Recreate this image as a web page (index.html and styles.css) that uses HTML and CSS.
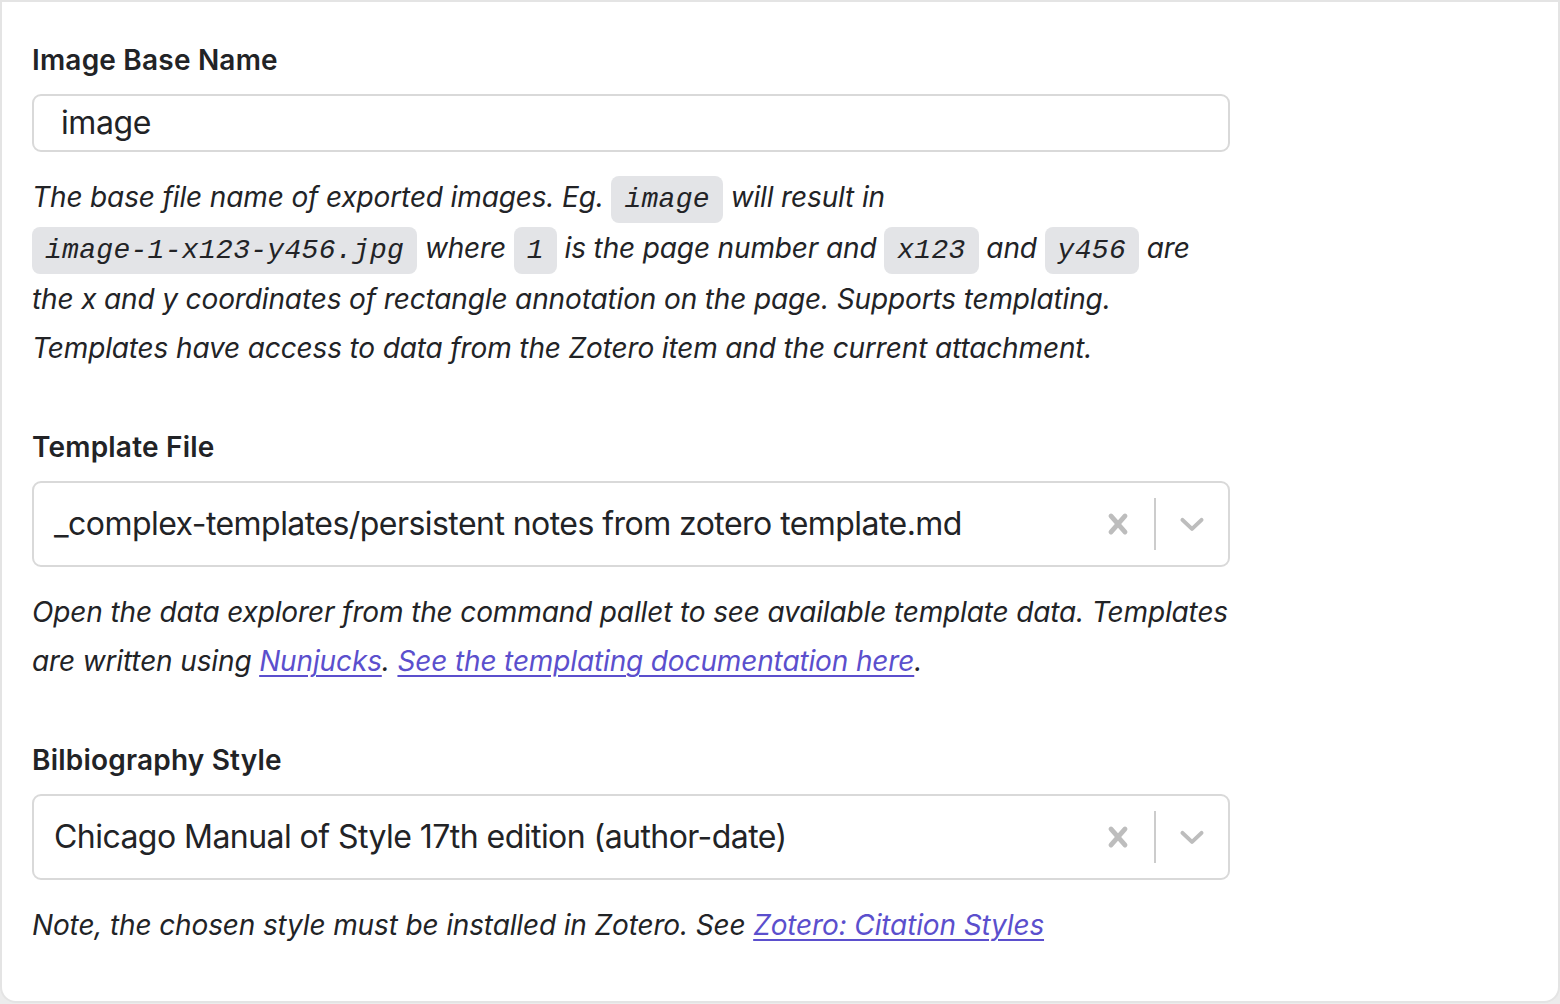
FILE: index.html
```html
<!DOCTYPE html>
<html>
<head>
<meta charset="utf-8">
<link rel="stylesheet" href="styles.css">
</head>
<body>
<div class="card">
  <div class="setting">
    <div class="label">Image Base Name</div>
    <div class="text-input">image</div>
    <p class="desc">The base file name of exported images. Eg. <code>image</code> will result in <code>image-1-x123-y456.jpg</code> where <code>1</code> is the page number and <code>x123</code> and <code>y456</code> are the x and y coordinates of rectangle annotation on the page. Supports templating. Templates have access to data from the Zotero item and the current attachment.</p>
  </div>
  <div class="setting">
    <div class="label">Template File</div>
    <div class="select">
      <div class="select-value">_complex-templates/persistent notes from zotero template.md</div>
      <div class="indicators">
        <svg class="ind-icon" width="40" height="40" viewBox="0 0 20 20"><path d="M14.35 14.85a1.2 1.2 0 0 1-1.7 0L10 11.82l-2.65 3.03a1.2 1.2 0 1 1-1.7-1.7l2.76-3.15-2.76-3.15a1.2 1.2 0 1 1 1.7-1.7L10 8.18l2.65-3.03a1.2 1.2 0 1 1 1.7 1.7L11.59 10l2.76 3.15a1.2 1.2 0 0 1 0 1.7z" fill="currentColor"/></svg>
        <span class="sep"></span>
        <svg class="ind-icon" width="40" height="40" viewBox="0 0 20 20"><path d="M4.52 7.21c.4-.4 1-.4 1.4 0L10 11.12l4.08-3.91c.4-.4 1-.4 1.4 0 .38.39.38 1 0 1.38l-4.78 4.58c-.39.39-1 .39-1.4 0L4.52 8.59a.96.96 0 0 1 0-1.38z" fill="currentColor"/></svg>
      </div>
    </div>
    <p class="desc">Open the data explorer from the command pallet to see available template data. Templates are written using <a href="#">Nunjucks</a>. <a href="#">See the templating documentation here</a>.</p>
  </div>
  <div class="setting">
    <div class="label">Bilbiography Style</div>
    <div class="select">
      <div class="select-value">Chicago Manual of Style 17th edition (author-date)</div>
      <div class="indicators">
        <svg class="ind-icon" width="40" height="40" viewBox="0 0 20 20"><path d="M14.35 14.85a1.2 1.2 0 0 1-1.7 0L10 11.82l-2.65 3.03a1.2 1.2 0 1 1-1.7-1.7l2.76-3.15-2.76-3.15a1.2 1.2 0 1 1 1.7-1.7L10 8.18l2.65-3.03a1.2 1.2 0 1 1 1.7 1.7L11.59 10l2.76 3.15a1.2 1.2 0 0 1 0 1.7z" fill="currentColor"/></svg>
        <span class="sep"></span>
        <svg class="ind-icon" width="40" height="40" viewBox="0 0 20 20"><path d="M4.52 7.21c.4-.4 1-.4 1.4 0L10 11.12l4.08-3.91c.4-.4 1-.4 1.4 0 .38.39.38 1 0 1.38l-4.78 4.58c-.39.39-1 .39-1.4 0L4.52 8.59a.96.96 0 0 1 0-1.38z" fill="currentColor"/></svg>
      </div>
    </div>
    <p class="desc">Note, the chosen style must be installed in Zotero. See <a href="#">Zotero: Citation Styles</a></p>
  </div>
</div>
</body>
</html>
```

FILE: styles.css
```css
html, body {
  margin: 0;
  padding: 0;
  background: #ececec;
}
body {
  font-family: Inter, "Noto Sans", sans-serif;
  color: #222326;
}
.card {
  box-sizing: border-box;
  width: 1560px;
  height: 1003px;
  background: #ffffff;
  border: 2px solid #e4e4e4;
  border-radius: 0 0 16px 16px;
  padding: 38px 0 0 30px;
}
.setting {
  width: 1198px;
  margin-bottom: 54px;
}
.label {
  font-size: 28px;
  font-weight: 600;
  line-height: 40px;
  color: #222326;
  margin-bottom: 14px;
  letter-spacing: 0.2px;
}
.text-input {
  box-sizing: border-box;
  height: 58px;
  border: 2px solid #d9d9d9;
  border-radius: 9px;
  padding-left: 27px;
  font-size: 32px;
  line-height: 54px;
  color: #222326;
  letter-spacing: -0.4px;
}
.select {
  box-sizing: border-box;
  height: 86px;
  border: 2px solid #d9d9d9;
  border-radius: 9px;
  display: flex;
  align-items: center;
  padding-left: 20px;
}
.select-value {
  flex: 1;
  font-size: 32px;
  line-height: 40px;
  color: #222326;
  white-space: nowrap;
  letter-spacing: -0.55px;
}
.indicators {
  display: flex;
  align-items: center;
  color: #bdbdbd;
}
.ind-icon {
  margin: 0 16px;
  display: block;
}
.sep {
  display: block;
  width: 2px;
  height: 52px;
  background: #cccccc;
}
.desc {
  margin: 21px -6px 0 0;
  font-size: 28px;
  font-style: italic;
  line-height: 49px;
  color: #222326;
  letter-spacing: -0.14px;
}
.desc code {
  font-family: "Liberation Mono", monospace;
  font-style: italic;
  font-size: 28px;
  background: #e3e4e7;
  border-radius: 8px;
  padding: 8px 13px;
  letter-spacing: 0.3px;
  white-space: nowrap;
}
.desc a {
  color: #5b4fcd;
  text-decoration: underline;
  text-decoration-thickness: 2px;
  text-underline-offset: 4px;
}
```
